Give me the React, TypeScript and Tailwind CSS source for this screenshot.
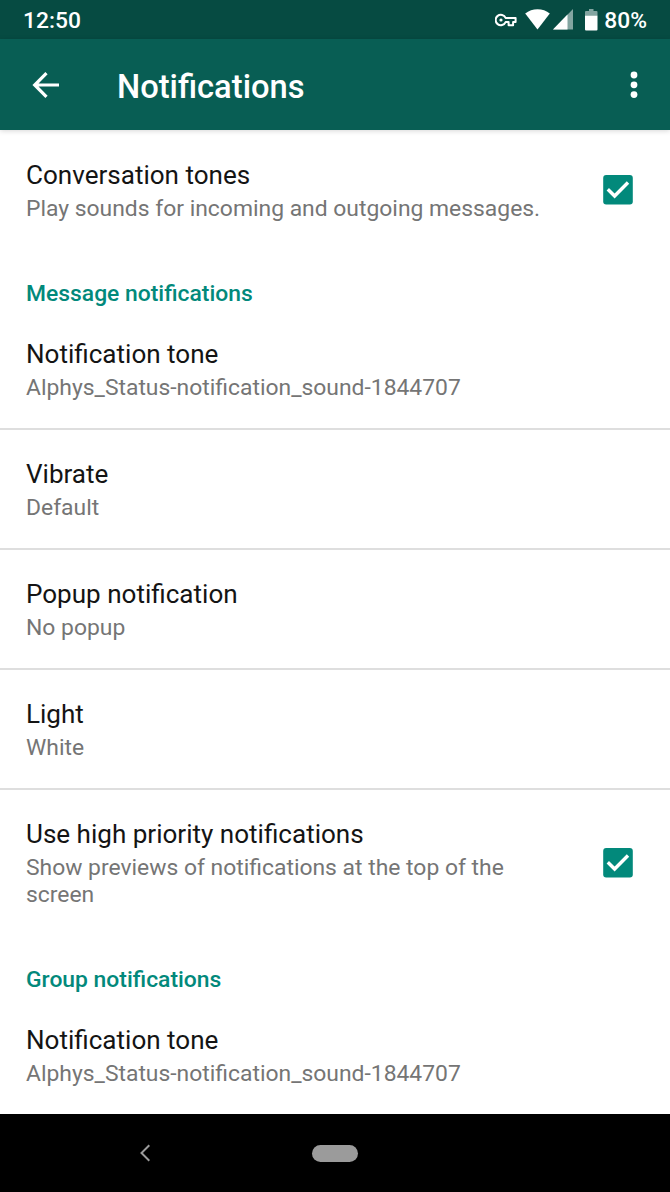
import type { ReactNode } from "react";

function StatusBar() {
  return (
    <div className="flex h-[39px] items-center justify-between bg-[#064b42] pr-[23px] pl-[23px] text-[22.8px] leading-[39px] font-medium text-white">
      <span className="pt-0.5">12:50</span>
      <div className="flex items-center">
        <svg width="22" height="14" viewBox="0 0 22 14" fill="none" stroke="#fff" strokeWidth="2">
          <path d="M10.6 4.9A5.2 5.2 0 1 0 10.6 9.1H13.6V12.3H18.1V9.1H20.6V4.9Z" strokeLinejoin="round" />
          <circle cx="6" cy="7" r="1.6" fill="#fff" stroke="none" />
        </svg>
        <svg className="ml-2" width="26" height="21" viewBox="0 0 26 21" fill="#fff">
          <path d="M12.500 20.500L.2 4.500C3.700 1.800 8 .3 12.500 .3S21.500 1.800 24.800 4.500Z" />
        </svg>
        <svg className="ml-0.5" width="20" height="21" viewBox="0 0 20 21" fill="#fff">
          <path d="M20 0V20.500H0Z" opacity=".5" />
          <path d="M14.500 5.600V20.500H0Z" />
        </svg>
        <svg className="ml-3" width="13" height="22" viewBox="0 0 13 22" fill="#fff">
          <path d="M4 0H8.500V2H11.500Q12.500 2 12.500 3V6.500H0V3Q0 2 1 2H4Z" opacity=".5" />
          <path d="M0 6.500H12.500V20.500Q12.500 21.500 11.500 21.500H1Q0 21.500 0 20.500Z" />
        </svg>
        <span className="ml-1.5 pt-0.5">80%</span>
      </div>
    </div>
  );
}

function AppBar() {
  return (
    <header className="relative z-10 flex h-[91px] items-center bg-[#085e54] pr-8 pl-8 text-white shadow-[0_1px_5px_rgba(0,0,0,0.16)]">
      <button type="button" aria-label="Back">
        <svg width="28" height="26" viewBox="0 0 28 26" fill="none" stroke="#fff" strokeWidth="3.200">
          <path d="M27 13H3M14.500 1.200L2.700 13L14.500 24.800" />
        </svg>
      </button>
      <h1 className="ml-[57px] flex-1 pt-1 text-[32.7px] leading-[38px] font-medium">Notifications</h1>
      <button type="button" aria-label="More options">
        <svg width="8" height="28" viewBox="0 0 8 28" fill="#fff">
          <circle cx="4" cy="4" r="3.400" />
          <circle cx="4" cy="13.800" r="3.400" />
          <circle cx="4" cy="23.600" r="3.400" />
        </svg>
      </button>
    </header>
  );
}

function Checkbox() {
  return (
    <svg className="mr-[37px] shrink-0" width="30" height="30" viewBox="0 0 30 30" role="img" aria-label="Checked">
      <rect x="0.2" width="29.6" height="29.6" rx="3" fill="#02897b" />
      <path d="M4.800 14.300L11.600 21L25 7.500" fill="none" stroke="#fff" strokeWidth="3.400" />
    </svg>
  );
}

type RowProps = {
  title: string;
  children: ReactNode;
  checked?: boolean;
  divider?: boolean;
};

function Row({ title, children, checked, divider }: RowProps) {
  return (
    <div
      className={`flex items-center justify-between pl-[26px] ${divider ? "border-b-2 border-[#dedede]" : ""}`}
    >
      <div className="max-w-[520px] pt-[29px] pb-[27px]">
        <div className="text-[26.06px] leading-[31px] text-[#141414]">{title}</div>
        <div className="mt-1 text-[22.88px] leading-[27px] text-[#757575]">{children}</div>
      </div>
      {checked && <Checkbox />}
    </div>
  );
}

function SectionTitle({ children }: { children: ReactNode }) {
  return (
    <h2 className="pt-[31px] pb-[3px] pl-[26px] text-[22.88px] leading-[27px] font-medium text-[#02897b]">
      {children}
    </h2>
  );
}

function NavBar() {
  return (
    <nav className="flex h-[78px] items-center bg-black pl-[139px]">
      <svg width="12" height="18" viewBox="0 0 12 18" fill="none" stroke="#9b9b9b" strokeWidth="2">
        <path d="M10.300 1.300L2.500 9L10.300 16.700" />
      </svg>
      <div className="ml-[161px] h-[17px] w-[46px] rounded-full bg-[#9b9b9b]" />
    </nav>
  );
}

export default function App() {
  return (
    <div className="flex h-[1192px] w-[670px] flex-col overflow-hidden bg-white font-[Roboto,sans-serif]">
      <StatusBar />
      <AppBar />
      <main className="h-[984px] shrink-0 overflow-hidden pt-px">
        <Row title="Conversation tones" checked>
          Play sounds for incoming and outgoing messages.
        </Row>
        <SectionTitle>Message notifications</SectionTitle>
        <Row title="Notification tone" divider>
          Alphys_Status-notification_sound-1844707
        </Row>
        <Row title="Vibrate" divider>
          Default
        </Row>
        <Row title="Popup notification" divider>
          No popup
        </Row>
        <Row title="Light" divider>
          White
        </Row>
        <Row title="Use high priority notifications" checked>
          Show previews of notifications at the top of the screen
        </Row>
        <SectionTitle>Group notifications</SectionTitle>
        <Row title="Notification tone">Alphys_Status-notification_sound-1844707</Row>
      </main>
      <NavBar />
    </div>
  );
}
